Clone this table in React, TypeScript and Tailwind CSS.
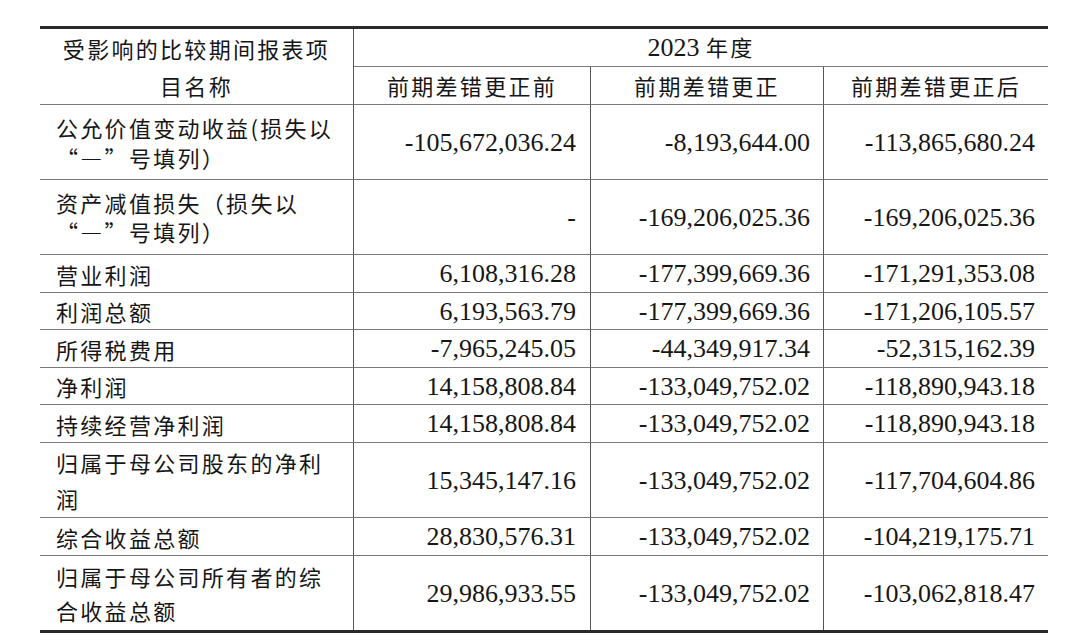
type Row = {
  label: string;
  before: string;
  change: string;
  after: string;
  h: string;
  lh: string;
};

const rows: Row[] = [
  {
    label: "公允价值变动收益(损失以“—”号填列）",
    before: "-105,672,036.24",
    change: "-8,193,644.00",
    after: "-113,865,680.24",
    h: "h-[75px]",
    lh: "leading-[30px]",
  },
  {
    label: "资产减值损失（损失以“—”号填列）",
    before: "-",
    change: "-169,206,025.36",
    after: "-169,206,025.36",
    h: "h-[75px]",
    lh: "leading-[29px]",
  },
  { label: "营业利润", before: "6,108,316.28", change: "-177,399,669.36", after: "-171,291,353.08", h: "h-[38px]", lh: "leading-[30px]" },
  { label: "利润总额", before: "6,193,563.79", change: "-177,399,669.36", after: "-171,206,105.57", h: "h-[37px]", lh: "leading-[30px]" },
  { label: "所得税费用", before: "-7,965,245.05", change: "-44,349,917.34", after: "-52,315,162.39", h: "h-[38px]", lh: "leading-[30px]" },
  { label: "净利润", before: "14,158,808.84", change: "-133,049,752.02", after: "-118,890,943.18", h: "h-[37px]", lh: "leading-[30px]" },
  { label: "持续经营净利润", before: "14,158,808.84", change: "-133,049,752.02", after: "-118,890,943.18", h: "h-[38px]", lh: "leading-[30px]" },
  {
    label: "归属于母公司股东的净利润",
    before: "15,345,147.16",
    change: "-133,049,752.02",
    after: "-117,704,604.86",
    h: "h-[75px]",
    lh: "leading-[36px]",
  },
  { label: "综合收益总额", before: "28,830,576.31", change: "-133,049,752.02", after: "-104,219,175.71", h: "h-[38px]", lh: "leading-[30px]" },
  {
    label: "归属于母公司所有者的综合收益总额",
    before: "29,986,933.55",
    change: "-133,049,752.02",
    after: "-103,062,818.47",
    h: "h-[74px]",
    lh: "leading-[34px]",
  },
];

const cjk = "font-['Noto_Sans_CJK_SC',sans-serif] text-[22px] tracking-[2.3px]";
const num = "font-['Liberation_Serif','Noto_Sans_CJK_SC',serif] text-[26px]";

const App = () => {
  return (
    <div className="w-[1080px] h-[643px] bg-white text-[#161616] pt-[26px] pl-[40px]" lang="zh-CN">
      <div className="w-[1008px] grid grid-cols-[314px_237px_233px_224px] border-t-[3px] border-b-[3px] border-[#2a2a2a]">
        {/* header */}
        <div
          className={`row-span-2 h-[76px] flex items-center justify-center text-center border-r border-r-[#555] border-b border-b-[#7a7a7a] leading-[37px] ${cjk}`}
        >
          <div>
            受影响的比较期间报表项
            <br />
            目名称
          </div>
        </div>
        <div
          className={`col-span-3 h-[38px] flex items-center justify-center border-b border-[#7a7a7a] ${num}`}
        >
          <span>
            2023 <span className={cjk}>年度</span>
          </span>
        </div>
        <div className={`h-[38px] flex items-center justify-center border-r border-r-[#555] border-b border-b-[#7a7a7a] ${cjk}`}>
          前期差错更正前
        </div>
        <div className={`h-[38px] flex items-center justify-center border-r border-r-[#555] border-b border-b-[#7a7a7a] ${cjk}`}>
          前期差错更正
        </div>
        <div className={`h-[38px] flex items-center justify-center border-b border-[#7a7a7a] ${cjk}`}>
          前期差错更正后
        </div>

        {rows.map((r, i) => {
          // last row sits on the thick rule, no thin line
          const line = i === rows.length - 1 ? "" : "border-b border-b-[#7a7a7a]";
          return (
            <div key={r.label} className="contents">
              <div className={`${r.h} flex items-center pl-4 pr-4 border-r border-r-[#555] ${line} ${cjk}`}>
                <div className={r.lh}>{r.label}</div>
              </div>
              <div className={`${r.h} flex items-center justify-end pr-[14px] border-r border-r-[#555] ${line} ${num}`}>
                {r.before}
              </div>
              <div className={`${r.h} flex items-center justify-end pr-[13px] border-r border-r-[#555] ${line} ${num}`}>
                {r.change}
              </div>
              <div className={`${r.h} flex items-center justify-end pr-[13px] ${line} ${num}`}>
                {r.after}
              </div>
            </div>
          );
        })}
      </div>
    </div>
  );
};

export default App;
